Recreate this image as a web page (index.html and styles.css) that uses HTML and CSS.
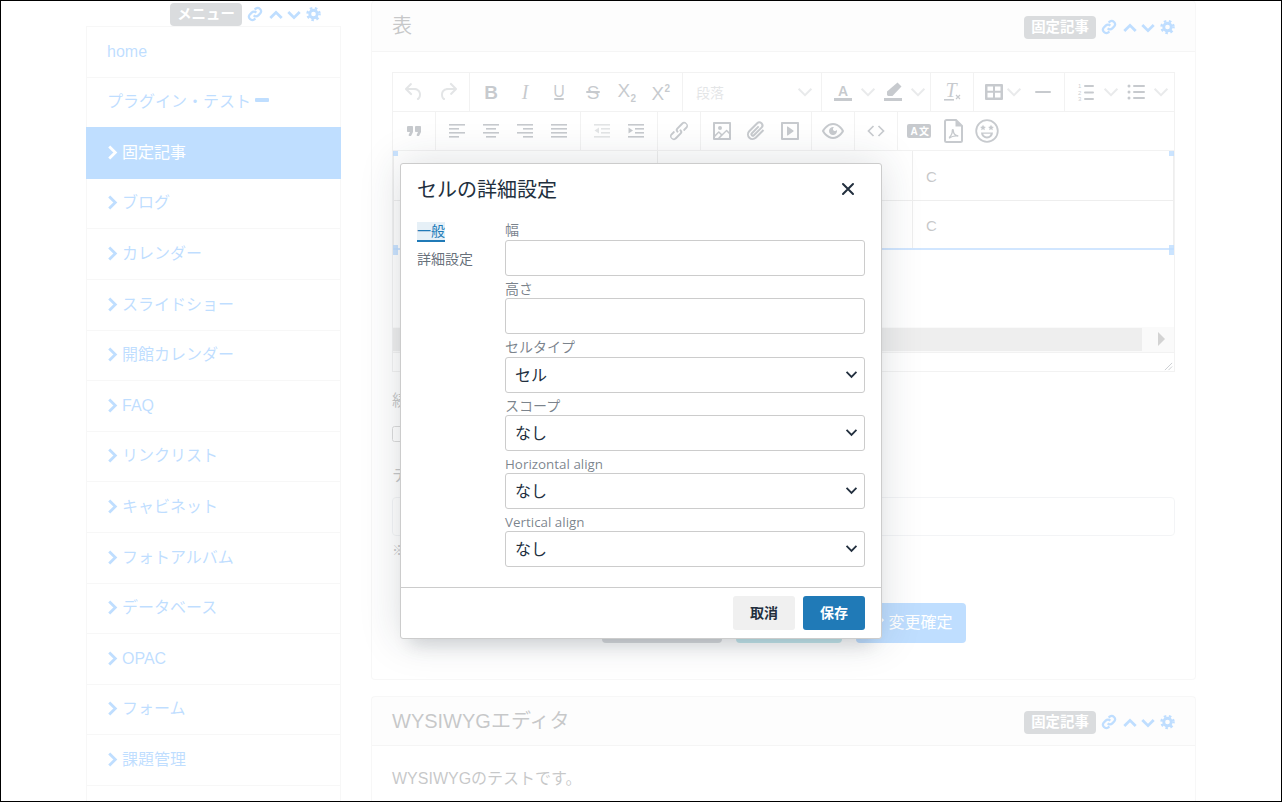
FILE: index.html
```html
<!DOCTYPE html>
<html lang="ja">
<head>
    <meta charset="utf-8">
    <meta name="viewport" content="width=device-width, initial-scale=1">
    <title>表</title>
    <link rel="stylesheet" href="styles.css">
</head>
<body>
<svg class="sprite" xmlns="http://www.w3.org/2000/svg">
    <symbol id="fa-link" viewBox="0 0 24 24"><g fill="none" stroke="currentColor" stroke-width="3.400"><path d="M10 14a5 5 0 0 0 7 0l3-3a5 5 0 0 0-7-7l-1.500 1.500"/><path d="M14 10a5 5 0 0 0-7 0l-3 3a5 5 0 0 0 7 7l1.500-1.500"/></g></symbol>
    <symbol id="fa-up" viewBox="0 0 16 16"><path d="M1.500 11.500L8 5l6.500 6.500" fill="none" stroke="currentColor" stroke-width="3.200"/></symbol>
    <symbol id="fa-down" viewBox="0 0 16 16"><path d="M1.500 4.500L8 11l6.500-6.500" fill="none" stroke="currentColor" stroke-width="3.200"/></symbol>
    <symbol id="fa-right" viewBox="0 0 16 16"><path d="M4.500 1.500l6.500 6.500-6.500 6.500" fill="none" stroke="currentColor" stroke-width="3"/></symbol>
    <symbol id="fa-check" viewBox="0 0 16 16"><path d="M2 8.500l4 4 8-8.500" fill="none" stroke="currentColor" stroke-width="3"/></symbol>
    <symbol id="fa-cog" viewBox="0 0 24 24"><circle cx="12" cy="12" r="6" fill="none" stroke="currentColor" stroke-width="4.500"/><circle cx="12" cy="12" r="9.600" fill="none" stroke="currentColor" stroke-width="4" stroke-dasharray="4 4.040" stroke-dashoffset="2"/></symbol>
    <symbol id="chev" viewBox="0 0 10 10"><path d="M1 3l4 4 4-4" fill="none" stroke="currentColor" stroke-width="1.200"/></symbol>
    <symbol id="chev-b" viewBox="0 0 10 10"><path d="M1.200 3l3.800 3.800L8.800 3" fill="none" stroke="currentColor" stroke-width="1.400"/></symbol>
    <symbol id="undo" viewBox="0 0 24 24"><path d="M6.400 8H12c3.700 0 6.200 2 6.800 5.100.6 2.700-.4 5.600-2.300 6.800a1 1 0 0 1-1-1.800c1.100-.6 1.800-2.700 1.400-4.600-.5-2.100-2.100-3.500-4.900-3.500H6.400l3.300 3.300a1 1 0 1 1-1.400 1.400l-5-5a1 1 0 0 1 0-1.400l5-5a1 1 0 0 1 1.400 1.400L6.400 8Z"/></symbol>
    <symbol id="redo" viewBox="0 0 24 24"><path d="M17.600 10H12c-2.800 0-4.400 1.400-4.900 3.500-.4 2 .3 4 1.400 4.600a1 1 0 1 1-1 1.800c-2-1.200-2.900-4.100-2.300-6.800.6-3 3-5.100 6.800-5.100h5.600l-3.300-3.300a1 1 0 1 1 1.400-1.400l5 5a1 1 0 0 1 0 1.400l-5 5a1 1 0 0 1-1.400-1.400l3.300-3.300Z"/></symbol>
    <symbol id="cross" viewBox="0 0 24 24"><path d="M7 7l10 10M17 7L7 17" fill="none" stroke="currentColor" stroke-width="2" stroke-linecap="round"/></symbol>
    <symbol id="highlight" viewBox="0 0 24 24"><path d="M16.500 2.500l4 4-9 9.500h-4.500l-1-1v-3.500z"/><rect x="3" y="18" width="18" height="3"/></symbol>
    <symbol id="table" viewBox="0 0 24 24"><path fill-rule="evenodd" d="M4 4h16a1 1 0 0 1 1 1v14a1 1 0 0 1-1 1H4a1 1 0 0 1-1-1V5a1 1 0 0 1 1-1Zm1.500 2.500v4.200h5.500V6.500H5.500Zm7.500 0v4.200h5.500V6.500H13Zm-7.500 6.300v4.700h5.500v-4.700H5.500Zm7.500 0v4.700h5.500v-4.700H13Z"/></symbol>
    <symbol id="hr" viewBox="0 0 24 24"><rect x="4" y="11" width="16" height="2" rx="1"/></symbol>
    <symbol id="ul" viewBox="0 0 24 24"><rect x="9" y="5" width="12" height="2" rx="1"/><rect x="9" y="11" width="12" height="2" rx="1"/><rect x="9" y="17" width="12" height="2" rx="1"/><circle cx="5" cy="6" r="1.500"/><circle cx="5" cy="12" r="1.500"/><circle cx="5" cy="18" r="1.500"/></symbol>
    <symbol id="quote" viewBox="0 0 24 24"><path d="M7.500 17h.9c.4 0 .7-.2.9-.6L11 13V8c0-.6-.4-1-1-1H6a1 1 0 0 0-1 1v4c0 .6.4 1 1 1h2l-1.300 2.700a1 1 0 0 0 .8 1.300Zm8 0h.9c.4 0 .7-.2.9-.6L19 13V8c0-.6-.4-1-1-1h-4a1 1 0 0 0-1 1v4c0 .6.4 1 1 1h2l-1.300 2.700a1 1 0 0 0 .8 1.300Z"/></symbol>
    <symbol id="al" viewBox="0 0 24 24"><rect x="4" y="5" width="16" height="1.600"/><rect x="4" y="9" width="10" height="1.600"/><rect x="4" y="13" width="16" height="1.600"/><rect x="4" y="17" width="10" height="1.600"/></symbol>
    <symbol id="ac" viewBox="0 0 24 24"><rect x="4" y="5" width="16" height="1.600"/><rect x="7" y="9" width="10" height="1.600"/><rect x="4" y="13" width="16" height="1.600"/><rect x="7" y="17" width="10" height="1.600"/></symbol>
    <symbol id="ar" viewBox="0 0 24 24"><rect x="4" y="5" width="16" height="1.600"/><rect x="10" y="9" width="10" height="1.600"/><rect x="4" y="13" width="16" height="1.600"/><rect x="10" y="17" width="10" height="1.600"/></symbol>
    <symbol id="aj" viewBox="0 0 24 24"><rect x="4" y="5" width="16" height="1.600"/><rect x="4" y="9" width="16" height="1.600"/><rect x="4" y="13" width="16" height="1.600"/><rect x="4" y="17" width="16" height="1.600"/></symbol>
    <symbol id="outdent" viewBox="0 0 24 24"><rect x="4" y="5" width="16" height="1.600"/><rect x="11" y="9" width="9" height="1.600"/><rect x="11" y="13" width="9" height="1.600"/><rect x="4" y="17" width="16" height="1.600"/><path d="M9 8.500v6L4.500 11.500z"/></symbol>
    <symbol id="indent" viewBox="0 0 24 24"><rect x="4" y="5" width="16" height="1.600"/><rect x="11" y="9" width="9" height="1.600"/><rect x="11" y="13" width="9" height="1.600"/><rect x="4" y="17" width="16" height="1.600"/><path d="M4.500 8.500v6L9 11.500z"/></symbol>
    <symbol id="link" viewBox="0 0 24 24"><path d="M6.200 12.300a1 1 0 0 1 1.400 1.400l-2 2a2 2 0 1 0 2.600 2.800l4.800-4.800a1 1 0 0 0 0-1.400 1 1 0 1 1 1.400-1.300 2.900 2.900 0 0 1 0 4L9.600 20a3.900 3.900 0 0 1-5.500-5.500l2-2Zm11.600-.6a1 1 0 0 1-1.400-1.400l2-2a2 2 0 1 0-2.600-2.800L11 10.300a1 1 0 0 0 0 1.400A1 1 0 1 1 9.600 13a2.900 2.900 0 0 1 0-4L14.400 4a3.900 3.900 0 0 1 5.500 5.500l-2 2Z"/></symbol>
    <symbol id="image" viewBox="0 0 24 24"><path fill-rule="evenodd" d="M4 3h16c.6 0 1 .4 1 1v16c0 .6-.4 1-1 1H4a1 1 0 0 1-1-1V4c0-.6.4-1 1-1Zm1 2v10.700l3.300-3.200c.3-.3.7-.3 1 0L12 15l4.100-4c.3-.4.8-.4 1 0l2 1.900V5H5Zm0 13v1h3l2.800-2.900-2-2L5 18Zm14-3-2.500-2.400-6.400 6.500H19v-4.100ZM10 11a2 2 0 1 0 0-4 2 2 0 0 0 0 4Z"/></symbol>
    <symbol id="clip" viewBox="0 0 24 24"><path d="M19.500 11l-7.800 7.800a4.600 4.600 0 0 1-6.500-6.500l8-8a3 3 0 0 1 4.300 4.300l-7.600 7.600a1.400 1.400 0 0 1-2-2l6.800-6.800" fill="none" stroke="currentColor" stroke-width="2"/></symbol>
    <symbol id="media" viewBox="0 0 24 24"><path fill-rule="evenodd" d="M4 3h16c.6 0 1 .4 1 1v16c0 .6-.4 1-1 1H4a1 1 0 0 1-1-1V4c0-.6.4-1 1-1Zm1 2v14h14V5H5Zm4.800 2.600 5.600 4a.5.5 0 0 1 0 .8l-5.600 4A.5.5 0 0 1 9 16V8a.5.5 0 0 1 .8-.4Z"/></symbol>
    <symbol id="eye" viewBox="0 0 24 24"><path fill-rule="evenodd" d="M3.500 12.500c.5.8 1.100 1.600 1.800 2.300 2 2 4.200 3.200 6.700 3.200s4.700-1.200 6.700-3.200a16.200 16.200 0 0 0 2.100-2.800 15.700 15.700 0 0 0-2.100-2.800c-2-2-4.200-3.200-6.700-3.200a9.300 9.300 0 0 0-6.700 3.200A16.200 16.200 0 0 0 3.200 12c0 .2.200.3.3.5Zm-2.400-1 .7-1.200L4 7.800C6.200 5.400 8.900 4 12 4c3 0 5.800 1.400 8.100 3.800a18.200 18.200 0 0 1 2.800 3.700v1l-.7 1.200-2.100 2.500c-2.300 2.400-5 3.800-8.100 3.800-3 0-5.800-1.400-8.100-3.800a18.200 18.200 0 0 1-2.800-3.700 1 1 0 0 1 0-1Zm12-3.300a2 2 0 1 0 2.700 2.600 4 4 0 1 1-2.700-2.600Z"/></symbol>
    <symbol id="code" viewBox="0 0 24 24"><path d="M9.500 7l-5 5 5 5M14.500 7l5 5-5 5" fill="none" stroke="currentColor" stroke-width="1.700"/></symbol>
    <symbol id="pdf" viewBox="0 0 24 24"><path d="M5.500 1h9.500l6 6v14.500a1.500 1.500 0 0 1-1.500 1.500h-14A1.500 1.500 0 0 1 4 21.500v-19A1.500 1.500 0 0 1 5.500 1Z" fill="none" stroke="currentColor" stroke-width="2"/><path d="M14.500 1v6.500h6.500z"/><path d="M8 18.500c2-1 3.500-4.500 3.300-7 0-1 1-1 1 0 0 3 2 5 5 5.500-3-.5-7 .5-9.300 2.200" fill="none" stroke="currentColor" stroke-width="1.300"/></symbol>
    <symbol id="emoji" viewBox="0 0 24 24"><circle cx="12" cy="12" r="10.800" fill="none" stroke="currentColor" stroke-width="1.800"/><path d="M8 5.800l.9 1.800 2 .3-1.500 1.400.4 2L8 10.300l-1.800 1 .4-2-1.500-1.400 2-.3zM16 5.800l.9 1.800 2 .3-1.500 1.400.4 2-1.800-1-1.800 1 .4-2-1.500-1.400 2-.3z"/><path fill-rule="evenodd" d="M6 13.500h12a6 6 0 0 1-12 0Zm2.200 1.300a4 4 0 0 0 7.600 0z"/></symbol>
</svg>

<div class="frame">
    <div class="page">
        <aside class="side">
            <div class="frame-head">
                <span class="badge">メニュー</span>
                <svg class="fa fa-link"><use href="#fa-link"/></svg>
                <svg class="fa fa-up"><use href="#fa-up"/></svg>
                <svg class="fa fa-down"><use href="#fa-down"/></svg>
                <svg class="fa fa-cog"><use href="#fa-cog"/></svg>
            </div>
            <ul class="menu">
                <li class="menu-item">home</li>
                <li class="menu-item">プラグイン・テスト<span class="minus"></span></li>
                <li class="menu-item active"><svg class="arrow"><use href="#fa-right"/></svg>固定記事</li>
                <li class="menu-item"><svg class="arrow"><use href="#fa-right"/></svg>ブログ</li>
                <li class="menu-item"><svg class="arrow"><use href="#fa-right"/></svg>カレンダー</li>
                <li class="menu-item"><svg class="arrow"><use href="#fa-right"/></svg>スライドショー</li>
                <li class="menu-item"><svg class="arrow"><use href="#fa-right"/></svg>開館カレンダー</li>
                <li class="menu-item"><svg class="arrow"><use href="#fa-right"/></svg>FAQ</li>
                <li class="menu-item"><svg class="arrow"><use href="#fa-right"/></svg>リンクリスト</li>
                <li class="menu-item"><svg class="arrow"><use href="#fa-right"/></svg>キャビネット</li>
                <li class="menu-item"><svg class="arrow"><use href="#fa-right"/></svg>フォトアルバム</li>
                <li class="menu-item"><svg class="arrow"><use href="#fa-right"/></svg>データベース</li>
                <li class="menu-item"><svg class="arrow"><use href="#fa-right"/></svg>OPAC</li>
                <li class="menu-item"><svg class="arrow"><use href="#fa-right"/></svg>フォーム</li>
                <li class="menu-item"><svg class="arrow"><use href="#fa-right"/></svg>課題管理</li>
                <li class="menu-item"></li>
            </ul>
        </aside>

        <main class="main">
            <section class="card card-first">
                <div class="card-head">
                    <h2 class="card-title">表</h2>
                    <div class="card-tools">
                        <span class="badge">固定記事</span>
                        <svg class="fa fa-link"><use href="#fa-link"/></svg>
                        <svg class="fa fa-up"><use href="#fa-up"/></svg>
                        <svg class="fa fa-down"><use href="#fa-down"/></svg>
                        <svg class="fa fa-cog"><use href="#fa-cog"/></svg>
                    </div>
                </div>
                <div class="card-body">
                    <div class="editor">
                        <div class="toolbar">
                            <div class="tgroup">
                                <span class="tbtn off"><svg class="ic"><use href="#undo"/></svg></span>
                                <span class="tbtn off"><svg class="ic"><use href="#redo"/></svg></span>
                            </div>
                            <div class="tgroup">
                                <span class="tbtn"><svg class="ic" viewBox="0 0 24 24"><text x="12" y="19" text-anchor="middle" class="t-b">B</text></svg></span>
                                <span class="tbtn"><svg class="ic" viewBox="0 0 24 24"><text x="12" y="19" text-anchor="middle" class="t-i">I</text></svg></span>
                                <span class="tbtn"><svg class="ic" viewBox="0 0 24 24"><text x="12" y="16.500" text-anchor="middle" class="t-u">U</text><rect x="7" y="18" width="10" height="2" rx="1"/></svg></span>
                                <span class="tbtn"><svg class="ic" viewBox="0 0 24 24"><text x="12" y="18.500" text-anchor="middle" class="t-s">S</text><rect x="5" y="11" width="14" height="2" rx="1"/></svg></span>
                                <span class="tbtn"><svg class="ic" viewBox="0 0 24 24"><text x="2.500" y="17" class="t-x">X</text><text x="15.500" y="21.500" class="t-n">2</text></svg></span>
                                <span class="tbtn"><svg class="ic" viewBox="0 0 24 24"><text x="2.500" y="20" class="t-x">X</text><text x="15.500" y="11.500" class="t-n">2</text></svg></span>
                            </div>
                            <div class="tgroup">
                                <span class="tselect off">段落<svg class="chev"><use href="#chev"/></svg></span>
                            </div>
                            <div class="tgroup">
                                <span class="tbtn"><svg class="ic" viewBox="0 0 24 24"><text x="12" y="16" text-anchor="middle" class="t-a">A</text><rect x="3" y="18" width="18" height="3"/></svg></span>
                                <span class="tsplit"><svg class="chev"><use href="#chev"/></svg></span>
                                <span class="tbtn"><svg class="ic"><use href="#highlight"/></svg></span>
                                <span class="tsplit"><svg class="chev"><use href="#chev"/></svg></span>
                            </div>
                            <div class="tgroup">
                                <span class="tbtn"><svg class="ic" viewBox="0 0 24 24"><text x="11" y="17" text-anchor="middle" class="t-i">T</text><rect x="4" y="19" width="10" height="1.600"/><path d="M16 15l4 4M20 15l-4 4" stroke="currentColor" stroke-width="1.200"/></svg></span>
                            </div>
                            <div class="tgroup">
                                <span class="tbtn tbtn-menu"><svg class="ic"><use href="#table"/></svg><svg class="chev"><use href="#chev"/></svg></span>
                                <span class="tbtn"><svg class="ic"><use href="#hr"/></svg></span>
                            </div>
                            <div class="tgroup tgroup-last">
                                <span class="tbtn"><svg class="ic" viewBox="0 0 24 24"><text x="4" y="8" class="t-o">1</text><text x="4" y="14.500" class="t-o">2</text><text x="4" y="21" class="t-o">3</text><rect x="10" y="5" width="10" height="2" rx="1"/><rect x="10" y="11.500" width="10" height="2" rx="1"/><rect x="10" y="18" width="10" height="2" rx="1"/></svg></span>
                                <span class="tsplit"><svg class="chev"><use href="#chev"/></svg></span>
                                <span class="tbtn"><svg class="ic"><use href="#ul"/></svg></span>
                                <span class="tsplit"><svg class="chev"><use href="#chev"/></svg></span>
                            </div>
                        </div>
                        <div class="toolbar">
                            <div class="tgroup"><span class="tbtn"><svg class="ic"><use href="#quote"/></svg></span></div>
                            <div class="tgroup">
                                <span class="tbtn"><svg class="ic"><use href="#al"/></svg></span>
                                <span class="tbtn"><svg class="ic"><use href="#ac"/></svg></span>
                                <span class="tbtn"><svg class="ic"><use href="#ar"/></svg></span>
                                <span class="tbtn"><svg class="ic"><use href="#aj"/></svg></span>
                            </div>
                            <div class="tgroup">
                                <span class="tbtn off"><svg class="ic"><use href="#outdent"/></svg></span>
                                <span class="tbtn"><svg class="ic"><use href="#indent"/></svg></span>
                            </div>
                            <div class="tgroup"><span class="tbtn"><svg class="ic"><use href="#link"/></svg></span></div>
                            <div class="tgroup">
                                <span class="tbtn"><svg class="ic"><use href="#image"/></svg></span>
                                <span class="tbtn"><svg class="ic"><use href="#clip"/></svg></span>
                                <span class="tbtn"><svg class="ic"><use href="#media"/></svg></span>
                            </div>
                            <div class="tgroup"><span class="tbtn"><svg class="ic"><use href="#eye"/></svg></span></div>
                            <div class="tgroup"><span class="tbtn"><svg class="ic"><use href="#code"/></svg></span></div>
                            <div class="tgroup tgroup-last">
                                <span class="tbtn"><svg class="ic" viewBox="0 0 24 24"><rect x="0" y="5" width="24" height="14" rx="2"/><text x="7" y="16" text-anchor="middle" class="t-tr">A</text><text x="17" y="16" text-anchor="middle" class="t-tr">文</text></svg></span>
                                <span class="tbtn"><svg class="ic"><use href="#pdf"/></svg></span>
                                <span class="tbtn"><svg class="ic"><use href="#emoji"/></svg></span>
                            </div>
                        </div>
                        <div class="edit-area">
                            <table class="cells">
                                <tr><td class="c1">A</td><td class="c2">B</td><td>C</td></tr>
                                <tr><td>A</td><td>B</td><td>C</td></tr>
                            </table>
                            <span class="handle h-tl"></span>
                            <span class="handle h-tr"></span>
                            <span class="handle h-bl"></span>
                            <span class="handle h-br"></span>
                        </div>
                        <div class="hscroll">
                            <div class="hscroll-thumb"></div>
                            <span class="hscroll-arrow"></span>
                        </div>
                        <div class="statusbar">
                            <svg class="grip" viewBox="0 0 10 10"><path d="M1 9l8-8M5 9l4-4" stroke="#222f3e" stroke-width="1" fill="none"/></svg>
                        </div>
                    </div>

                    <div class="group-label">続きを読む</div>
                    <label class="check-row"><input type="checkbox" class="check"></label>
                    <div class="group-label group-label-2">テキスト</div>
                    <input type="text" class="text-input">
                    <p class="note">※</p>
                    <div class="actions">
                        <span class="btn btn-grey"></span>
                        <span class="btn btn-teal"></span>
                        <span class="btn btn-blue"><svg class="btn-check"><use href="#fa-check"/></svg>変更確定</span>
                    </div>
                </div>
            </section>

            <section class="card card-second">
                <div class="card-head">
                    <h2 class="card-title">WYSIWYGエディタ</h2>
                    <div class="card-tools">
                        <span class="badge">固定記事</span>
                        <svg class="fa fa-link"><use href="#fa-link"/></svg>
                        <svg class="fa fa-up"><use href="#fa-up"/></svg>
                        <svg class="fa fa-down"><use href="#fa-down"/></svg>
                        <svg class="fa fa-cog"><use href="#fa-cog"/></svg>
                    </div>
                </div>
                <div class="card-body">
                    <p class="para">WYSIWYGのテストです。</p>
                </div>
            </section>
        </main>
    </div>

    <div class="backdrop"></div>

    <div class="dialog">
        <div class="dlg-head">
            <span class="dlg-title">セルの詳細設定</span>
            <svg class="dlg-close"><use href="#cross"/></svg>
        </div>
        <div class="dlg-body">
            <div class="tabs">
                <span class="tab tab-on">一般</span>
                <span class="tab">詳細設定</span>
            </div>
            <div class="fields">
                <label class="field-label field-label-first">幅</label>
                <input type="text" class="field-input">
                <label class="field-label">高さ</label>
                <input type="text" class="field-input">
                <label class="field-label field-label-tall">セルタイプ</label>
                <div class="select-wrap">
                    <select class="field-select"><option>セル</option></select>
                    <svg class="select-chev"><use href="#chev-b"/></svg>
                </div>
                <label class="field-label">スコープ</label>
                <div class="select-wrap">
                    <select class="field-select"><option>なし</option></select>
                    <svg class="select-chev"><use href="#chev-b"/></svg>
                </div>
                <label class="field-label field-label-en">Horizontal align</label>
                <div class="select-wrap">
                    <select class="field-select"><option>なし</option></select>
                    <svg class="select-chev"><use href="#chev-b"/></svg>
                </div>
                <label class="field-label field-label-en">Vertical align</label>
                <div class="select-wrap">
                    <select class="field-select"><option>なし</option></select>
                    <svg class="select-chev"><use href="#chev-b"/></svg>
                </div>
            </div>
        </div>
        <div class="dlg-foot">
            <span class="dlg-btn dlg-cancel">取消</span>
            <span class="dlg-btn dlg-save">保存</span>
        </div>
    </div>
</div>
</body>
</html>
```

FILE: styles.css
```css
* {
    box-sizing: border-box;
}
html, body {
    margin: 0;
    padding: 0;
}
body {
    font-family: "Liberation Sans", "Noto Sans CJK JP", sans-serif;
    font-size: 16px;
    line-height: 1.5;
    color: #212529;
    background: #fff;
}
.sprite {
    display: none;
}
.frame {
    position: relative;
    width: 1282px;
    height: 802px;
    border: 1px solid #000;
    overflow: hidden;
}
.page {
    display: flex;
    width: 1140px;
    margin: 0 auto;
}

/* left column */
.side {
    width: 285px;
    padding: 0 15px;
}
.frame-head {
    height: 25px;
    padding: 2px 20px 0 0;
    display: flex;
    justify-content: flex-end;
    align-items: flex-start;
}
.badge {
    display: inline-block;
    height: 23px;
    width: 72px;
    text-align: center;
    background: #6c757d;
    color: #fff;
    font-size: 14.4px;
    font-weight: 700;
    line-height: 23px;
    border-radius: 4px;
}
.fa {
    height: 16px;
    margin-top: 3px;
    color: #007bff;
}
.fa-link {
    width: 16px;
    margin-left: 5px;
}
.fa-up, .fa-down {
    width: 14px;
    height: 14px;
    margin-top: 5px;
}
.fa-up {
    margin-left: 6px;
}
.fa-down {
    margin-left: 4px;
}
.fa-cog {
    width: 15px;
    margin-left: 5px;
}
.menu {
    list-style: none;
    margin: 0;
    padding: 0;
}
.menu-item {
    height: 51.6px;
    margin-bottom: -1px;
    padding: 12.6px 20px;
    border: 1px solid rgba(0, 0, 0, .125);
    color: #007bff;
    background: #fff;
    white-space: nowrap;
}
.menu-item.active {
    position: relative;
    background: #007bff;
    border-color: #007bff;
    color: #fff;
}
.arrow {
    width: 15px;
    height: 15px;
    margin: 0 2px 0 -2px;
    vertical-align: -2px;
}
.minus {
    display: inline-block;
    width: 14px;
    height: 4px;
    margin-left: 4px;
    border-radius: 1px;
    background: #007bff;
    vertical-align: 5px;
}

/* right column */
.main {
    width: 855px;
    padding: 0 15px;
}
.card {
    border: 1px solid rgba(0, 0, 0, .125);
    border-radius: 4px;
    background: #fff;
}
.card-first {
    height: 679px;
    margin-bottom: 16px;
    border-top: 0;
}
.card-head {
    height: 51px;
    padding: 0 20px;
    display: flex;
    justify-content: space-between;
    align-items: center;
    background: rgba(0, 0, 0, .03);
    border-bottom: 1px solid rgba(0, 0, 0, .125);
}
.card-second .card-head {
    height: 49px;
}
.card-second .card-body {
    padding-top: 21px;
}
.card-title {
    margin: 0;
    font-size: 20px;
    font-weight: 400;
    line-height: 1.2;
}
.card-tools {
    display: flex;
    align-items: flex-start;
    margin-top: 3px;
}
.card-body {
    padding: 20px;
}
.para {
    margin: 0;
}

/* editor */
.editor {
    height: 300px;
    border: 1px solid #ccc;
}
.toolbar {
    display: flex;
    height: 39px;
    border-bottom: 1px solid #ccc;
    color: #222f3e;
}
.tgroup {
    display: flex;
    align-items: center;
    padding: 0 4px;
    border-right: 1px solid #ccc;
    fill: currentColor;
}
.tgroup-last {
    border-right: 0;
}
.tbtn {
    display: flex;
    align-items: center;
    justify-content: center;
    width: 34px;
    height: 34px;
}
.tbtn-menu {
    width: 48px;
    justify-content: flex-start;
    padding-left: 4px;
}
.off {
    opacity: .5;
}
.ic {
    width: 24px;
    height: 24px;
}
.tsplit {
    display: flex;
    align-items: center;
    justify-content: center;
    width: 16px;
    height: 34px;
}
.chev {
    width: 16px;
    height: 16px;
    opacity: .4;
}
.tselect {
    display: flex;
    align-items: center;
    justify-content: space-between;
    width: 130px;
    height: 34px;
    padding: 0 4px 0 9px;
    font-family: "Open Sans", "Noto Sans CJK JP", sans-serif;
    font-size: 14px;
}
.tselect .chev {
    opacity: .8;
}
.t-b { font: 700 19px "Liberation Sans", sans-serif; }
.t-i { font: italic 400 20px "Liberation Serif", serif; }
.t-u { font: 400 16px "Liberation Sans", sans-serif; }
.t-s { font: 400 19px "Liberation Sans", sans-serif; }
.t-x { font: 400 19px "Liberation Sans", sans-serif; }
.t-n { font: 700 10px "Liberation Sans", sans-serif; }
.t-a { font: 700 14px "Liberation Sans", sans-serif; }
.t-o { font: 400 6px "Liberation Sans", sans-serif; }
.t-tr { font: 700 10px "Liberation Sans", "Noto Sans CJK JP", sans-serif; fill: #fff; }

.edit-area {
    position: relative;
    height: 176px;
    overflow: hidden;
}
.cells {
    width: 781px;
    border-collapse: collapse;
    table-layout: fixed;
    font-size: 15px;
    border-bottom: 2px solid #4a9dff;
}
.cells td {
    height: 49px;
    padding: 3px 13px 0;
    border: 1px solid #bbb;
    border-top: 0;
}
.cells tr + tr td {
    border-top: 1px solid #ccc;
}
.cells .c1 {
    width: 264px;
}
.cells .c2 {
    width: 255px;
}
.handle {
    position: absolute;
    width: 5px;
    background: #007bff;
    opacity: .8;
}
.h-tl { left: 0; top: 0; height: 5px; }
.h-tr { right: 0; top: 0; height: 5px; }
.h-bl { left: 0; top: 94px; height: 10px; }
.h-br { right: 0; top: 94px; height: 10px; }

.hscroll {
    position: relative;
    height: 26px;
    background: #eaeaea;
    padding-top: 1px;
    border-bottom: 1px solid #ccc;
}
.hscroll-thumb {
    width: 749px;
    height: 23px;
    background: #bbb;
}
.hscroll-arrow {
    position: absolute;
    right: 9px;
    top: 5px;
    border-left: 7px solid #505050;
    border-top: 7px solid transparent;
    border-bottom: 7px solid transparent;
}
.statusbar {
    position: relative;
    height: 18px;
}
.grip {
    position: absolute;
    right: 1px;
    bottom: 0;
    width: 9px;
    height: 9px;
}

/* rest of the form */
.group-label {
    margin-top: 17px;
    height: 24px;
}
.check-row {
    display: flex;
    align-items: center;
    height: 24px;
    margin-top: 9px;
}
.check {
    width: 16px;
    height: 16px;
    margin: 0 8px 0 0;
}
.group-label-2 {
    margin-top: 18px;
}
.text-input {
    display: block;
    width: 100%;
    height: 39px;
    margin-top: 9px;
    border: 1px solid #ced4da;
    border-radius: 4px;
}
.note {
    margin: 4px 0 0;
    height: 20px;
    font-size: 14px;
    line-height: 20px;
}
.actions {
    display: flex;
    justify-content: center;
    gap: 14px;
    margin-top: 43px;
    padding-left: 1px;
}
.btn {
    height: 40px;
    line-height: 40px;
    text-align: center;
    color: #fff;
    border-radius: 4px;
}
.btn-grey {
    width: 120px;
    background: #6c757d;
}
.btn-teal {
    width: 106px;
    background: #17a2b8;
}
.btn-blue {
    width: 110px;
    background: #007bff;
}
.btn-check {
    width: 16px;
    height: 16px;
    margin-right: 3px;
    vertical-align: -3px;
}

/* dialog over the page */
.backdrop {
    position: absolute;
    left: 0;
    top: 0;
    right: 0;
    bottom: 0;
    background: rgba(255, 255, 255, .75);
}
.dialog {
    position: absolute;
    left: 399px;
    top: 162px;
    width: 482px;
    height: 476px;
    display: flex;
    flex-direction: column;
    background: #fff;
    border: 1px solid #ccc;
    border-radius: 3px;
    color: #222f3e;
    font-family: "Open Sans", "Noto Sans CJK JP", sans-serif;
    box-shadow: 0 16px 16px -10px rgba(34, 47, 62, .15), 0 0 40px 1px rgba(34, 47, 62, .15);
}
.dlg-head {
    height: 54px;
    flex: none;
    display: flex;
    justify-content: space-between;
    padding: 11px 22px 0 16px;
}
.dlg-title {
    font-size: 20px;
    line-height: 30px;
}
.dlg-close {
    width: 24px;
    height: 24px;
    margin-top: 2px;
    margin-right: -1px;
}
.dlg-body {
    flex: 1;
    display: flex;
    padding: 0 16px;
}
.tabs {
    width: 88px;
    flex: none;
    display: flex;
    flex-direction: column;
    align-items: flex-start;
    padding-top: 4px;
}
.tab {
    font-size: 14px;
    line-height: 20px;
    margin-bottom: 7px;
    color: rgba(34, 47, 62, .7);
}
.tab-on {
    height: 20px;
    line-height: 18px;
    color: #207ab7;
    background: #e6f0f7;
    border-bottom: 2px solid #207ab7;
}
.fields {
    flex: 1;
    display: flex;
    flex-direction: column;
}
.field-label {
    height: 22px;
    font-size: 14px;
    line-height: 26px;
    color: rgba(34, 47, 62, .6);
    white-space: nowrap;
}
.field-label-first {
    line-height: 24px;
}
.field-label-tall {
    height: 23px;
}
.field-label-en {
    font-size: 13.4px;
    line-height: 27px;
}
.field-input, .field-select {
    display: block;
    width: 100%;
    height: 36px;
    border: 1px solid #ccc;
    border-radius: 3px;
    background: #fff;
    color: #222f3e;
    font: 16px "Open Sans", "Noto Sans CJK JP", sans-serif;
}
.field-select {
    appearance: none;
    padding: 0 24px 0 9px;
}
.select-wrap {
    position: relative;
}
.select-chev {
    position: absolute;
    right: 7px;
    top: 11px;
    width: 13px;
    height: 13px;
    color: #222f3e;
}
.dlg-foot {
    height: 51px;
    flex: none;
    display: flex;
    justify-content: flex-end;
    gap: 8px;
    padding: 8px 16px;
    border-top: 1px solid #ccc;
}
.dlg-btn {
    width: 62px;
    height: 34px;
    text-align: center;
    font-size: 14px;
    font-weight: 700;
    line-height: 34px;
    border-radius: 3px;
}
.dlg-cancel {
    background: #f0f0f0;
}
.dlg-save {
    background: #207ab7;
    color: #fff;
}
```
